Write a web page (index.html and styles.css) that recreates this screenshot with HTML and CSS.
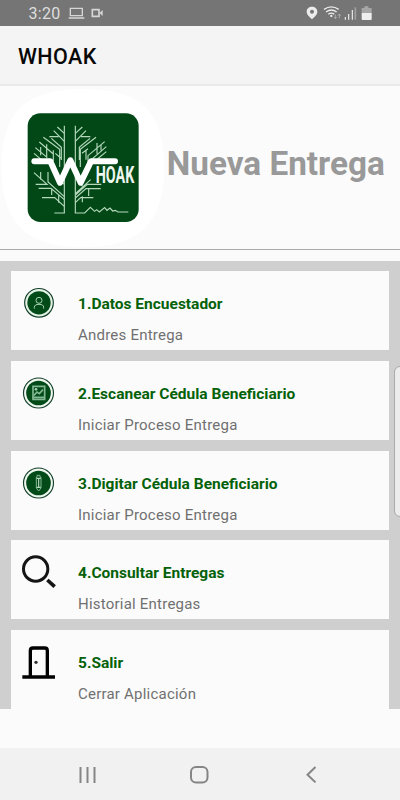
FILE: index.html
```html
<!DOCTYPE html>
<html lang="es">
<head>
<meta charset="utf-8">
<title>WHOAK</title>
<link rel="stylesheet" href="styles.css">
</head>
<body>
<div class="screen">
  <div class="status">
    <span class="clock">3:20</span>
    <svg class="status-left" viewBox="0 0 114 78" fill="none" stroke="#d6d6d6" stroke-width="4">
      <path d="M13 25h36v22H13zM8 54h47" /><path d="M79 29h20v20H79z" stroke-width="5"/><path d="M101 38l9-8v18l-9-8z" fill="#d6d6d6" stroke="none"/>
    </svg>
    <svg class="status-right" viewBox="0 0 210 78" fill="none">
      <path fill="#ececec" fill-rule="evenodd" d="M27 20c-9 0-16 6-16 15 0 10 10 16 16 23 6-7 16-13 16-23 0-9-7-15-16-15zm0 9a6 6 0 1 1 0 12 6 6 0 0 1 0-12z"/>
      <g stroke="#ececec" stroke-width="4"><path d="M63 28q22-15 44 0M69 36q16-12 32 0M76 43q9-7 18 0"/></g>
      <circle cx="85" cy="48" r="3.5" fill="#ececec"/>
      <path stroke="#b4b4b4" stroke-width="2.5" d="M97 44v11m-4-4l4 5 4-5M109 55V43m-4 4l4-5 4 5"/>
      <path stroke="#ececec" stroke-width="3.5" d="M127 59v-8M137 59V42M148 59V30"/><path stroke="#a0a0a0" stroke-width="5" d="M157 59V22"/>
      <path fill="#a6a6a6" d="M176 39V24h8v-5h12v5h10v15z"/><path fill="#eee" d="M176 39h30v18q0 3-3 3h-24q-3 0-3-3z"/>
    </svg>
  </div>
  <header class="appbar">WHOAK</header>
  <section class="hero">
    <svg class="logo" viewBox="0 3 510 489" fill="none">
      <path fill="#fff" d="M248 13C420 13 492 75 492 245S420 486 248 486 5 415 5 245 80 13 248 13z"/>
      <rect x="83" y="85" width="333" height="326" rx="38" fill="#024817"/>
      <g stroke="#b4d8ba" stroke-width="3.5">
        <path d="M193 122v262h-30M226 122v262h28l17-17 13 12 6-5 8 7 16-13 7 8 9-7 8 9 8-2 8 5h31"/>
        <path d="M172 126l21 19M148 155h28M161 137l32 32M130 157l49 36v53M154 160l30 27v38M166 205l16 14M160 196v32M118 171l42 36M106 188l36 30M140 178v40M102 205l28 24M122 186v25M100 222l18 10"/>
        <path d="M247 126l-21 19M271 155h-28M258 137l-32 32M288 157l-47 36v53M270 160l-32 27v38M314 170l-50 42v30M291 174v32M319 185l-44 38M258 196v28M303 196v-18M319 200l-34 28M246 205l18-14"/>
        <path d="M102 263l39 35h-34M122 284v-23M116 310h37l40 34M144 261v30l49 44M126 338h38l29 26M155 310v20M172 278l21 20M176 330v23"/>
        <path d="M272 284l-46 42M304 298h-42l-36 32M302 311h-44l-32 28M280 338h-38l-16 15M266 311v22M247 334v18M246 280v24"/>
      </g>
      <path d="M103 229h48l29 64 31-67 31 67 31-64h72" stroke="#fff" stroke-width="18" stroke-linejoin="round" stroke-linecap="round"/>
      <text class="logo-text" x="287" y="293" textLength="116" lengthAdjust="spacingAndGlyphs">HOAK</text>
    </svg>
    <h1>Nueva Entrega</h1>
  </section>
  <main class="list">
    <article class="card">
      <svg class="icon" viewBox="0 0 108 108" fill="none"><circle cx="54" cy="53.500" r="43" fill="#e4f3e7" stroke="#16402a" stroke-width="3.5"/><circle cx="54" cy="53.500" r="35" fill="#024a18"/><g stroke="#a9d3b4" stroke-width="3"><circle cx="54" cy="46" r="9"/><path d="M40 71v-4q0-9 14-9t14 9v4"/></g></svg>
      <div><h2>1.Datos Encuestador</h2><p>Andres Entrega</p></div>
    </article>
    <article class="card">
      <svg class="icon" viewBox="0 0 108 108" fill="none"><circle cx="52.500" cy="54" r="45" fill="#eef8f0" stroke="#16402a" stroke-width="3.5"/><circle cx="52.500" cy="54" r="37" fill="#024a18"/><g stroke="#82b891" stroke-width="5"><path d="M36 34h35v39H36z"/><path d="M39 61l9-10 7 5 11-12M34 67h38"/></g><circle cx="45" cy="43" r="4" fill="#a9d3b4"/></svg>
      <div><h2>2.Escanear Cédula Beneficiario</h2><p>Iniciar Proceso Entrega</p></div>
    </article>
    <article class="card">
      <svg class="icon" viewBox="0 0 108 108" fill="none"><circle cx="52.500" cy="54" r="45" fill="#eef8f0" stroke="#16402a" stroke-width="3.5"/><circle cx="52.500" cy="54" r="37" fill="#024a18"/><path d="M48 31h9v6h3v32l-7 9-7-9V37h2z" stroke="#82b891" stroke-width="3"/><path d="M53 40v29M47 40h12M47 67h12" stroke="#b4d8ba" stroke-width="3.5"/></svg>
      <div><h2>3.Digitar Cédula Beneficiario</h2><p>Iniciar Proceso Entrega</p></div>
    </article>
    <article class="card">
      <svg class="icon" viewBox="0 0 108 108" fill="none" stroke="#151515"><circle cx="44" cy="45" r="36.500" stroke-width="9"/><path d="M79 78l22 20" stroke-width="11"/></svg>
      <div><h2>4.Consultar Entregas</h2><p>Historial Entregas</p></div>
    </article>
    <article class="card">
      <svg class="icon" viewBox="0 0 108 108" fill="none" stroke="#000"><path d="M28 98V20q0-8 8-8h35q8 0 8 8v78" stroke-width="10"/><path d="M4 99h98" stroke-width="10"/><circle cx="45" cy="55" r="5" fill="#333" stroke="none"/></svg>
      <div><h2>5.Salir</h2><p>Cerrar Aplicación</p></div>
    </article>
  </main>
  <nav class="navbar">
    <svg viewBox="0 0 400 52" fill="none" stroke="#858585" stroke-width="2"><path d="M80.500 19v16M87.500 19v16M94.500 19v16"/><rect x="191" y="19" width="16.500" height="15.500" rx="5"/><path d="M315.500 19l-8 7.700 8 7.700"/></svg>
  </nav>
  <div class="edge-handle"></div>
</div>
</body>
</html>
```
FILE: styles.css
```css
* { box-sizing: border-box; margin: 0; }
body { font-family: Roboto, "Liberation Sans", sans-serif; background: #fafafa; }
.screen { position: relative; width: 400px; height: 800px; overflow: hidden; display: flex; flex-direction: column; background: #fbfbfb; }
.status { flex: none; height: 26px; background: #757575; display: flex; padding-left: 28.500px; }
.clock { width: 37px; font-size: 16px; line-height: 27px; color: #dedede; letter-spacing: 0.3px; }
.status-left { width: 38px; height: 26px; }
.status-right { width: 70px; height: 26px; margin-left: 199.800px; }
.appbar { flex: none; height: 60px; padding-left: 18px; background: #f4f4f4; border-bottom: 2px solid #eaeaea; font-size: 21.5px; font-weight: 500; line-height: 62px; letter-spacing: 0.4px; color: #080808; }
.hero { flex: none; height: 163.500px; display: flex; border-bottom: 1px solid #a9a9a9; }
.logo { flex: none; width: 170px; height: 163px; margin-right: -3.200px; }
.logo-text { font-family: Roboto, sans-serif; font-weight: 700; font-size: 70px; fill: #edf7ef; }
h1 { font-size: 33.300px; font-weight: 700; line-height: 156px; color: #999; white-space: nowrap; }
.list { flex: none; height: 448px; margin-top: 11.500px; padding: 10.200px 11px 0; display: flex; flex-direction: column; gap: 10.700px; background: #cfcfcf; }
.card { flex: none; height: 79px; display: flex; gap: 21px; padding: 14px 10px 0; background: #fbfbfb; }
.icon { flex: none; width: 36px; height: 36px; }
h2 { margin-top: 9px; font-size: 15.500px; font-weight: 700; line-height: 20px; color: #056109; white-space: nowrap; }
p { margin-top: 11px; font-size: 15px; line-height: 20px; color: #707070; white-space: nowrap; letter-spacing: 0.22px; }
.navbar { flex: none; height: 52px; margin-top: auto; background: #f1f1f1; }
.navbar svg { display: block; width: 400px; height: 52px; }
.edge-handle { position: absolute; left: 394px; top: 366px; width: 12px; height: 151px; border: 1px solid #aaa; border-radius: 6px; background: #ececec; }
```
